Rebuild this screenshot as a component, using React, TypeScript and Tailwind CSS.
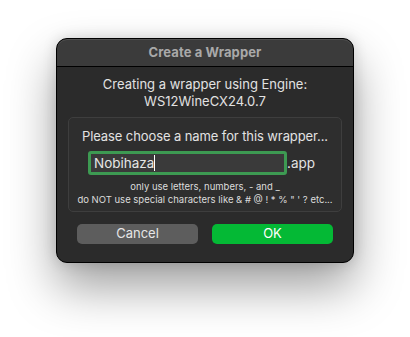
import React from "react";

export default function App() {
  return (
    <div
      className="w-[410px] h-[337px] bg-white pl-[56px] pt-[38px]"
      style={{ fontFamily: "Inter, 'Liberation Sans', sans-serif" }}
    >
      <div className="w-[298px] h-[225px] rounded-[11px] border border-black bg-[#2b2b2b] shadow-[0_24px_48px_rgba(0,0,0,0.38),0_0_14px_rgba(0,0,0,0.15)] overflow-hidden flex flex-col">
        <div className="h-[28px] shrink-0 bg-[#3b3b3b] border-b border-black flex items-center justify-center rounded-t-[10px] shadow-[inset_0_1px_0_rgba(255,255,255,0.12)]">
          <span className="text-[13px] font-bold text-[#a9a9a9] tracking-[0.1px] mt-[1px]">
            Create a Wrapper
          </span>
        </div>
        <div className="flex flex-col px-[11px] pt-[9px]">
          <div className="text-center text-[13px] leading-[17px] text-[#e2e2e2]">
            <div>Creating a wrapper using Engine:</div>
            <div>WS12WineCX24.0.7</div>
          </div>
          <div className="mt-[7px] h-[95px] rounded-[5px] border border-[#3e3e3e] bg-[#2e2e2e] flex flex-col pt-[10px]">
            <div className="text-center text-[13px] leading-[17px] text-[#e2e2e2] tracking-[-0.1px]">
              Please choose a name for this wrapper...
            </div>
            <div className="mt-[6px] flex items-center pl-[19px]">
              <div className="w-[199px] h-[24px] shrink-0 rounded-[3px] border-[3px] border-[#3d9a52] bg-[#3a3a3a] flex items-center pl-[3px]">
                <span className="text-[13.5px] text-[#e6e6e6]">Nobihaza</span>
                <span className="w-px h-[16px] bg-white" />
              </div>
              <span className="text-[13.5px] text-[#e2e2e2]">.app</span>
            </div>
            <div className="mt-[5px] text-center text-[9.5px] leading-[13px] text-[#dcdcdc]">
              <div>only use letters, numbers, - and _</div>
              <div>do NOT use special characters like &amp; # @ ! * % " ' ? etc...</div>
            </div>
          </div>
          <div className="mt-[12px] flex justify-between px-[9px]">
            <button className="w-[121px] h-[20px] rounded-[5px] bg-[#5d5d5d] text-[13px] text-[#e6e6e6] flex items-center justify-center">
              Cancel
            </button>
            <button className="w-[121px] h-[20px] rounded-[5px] bg-[#04b935] text-[13px] text-white flex items-center justify-center">
              OK
            </button>
          </div>
        </div>
      </div>
    </div>
  );
}
